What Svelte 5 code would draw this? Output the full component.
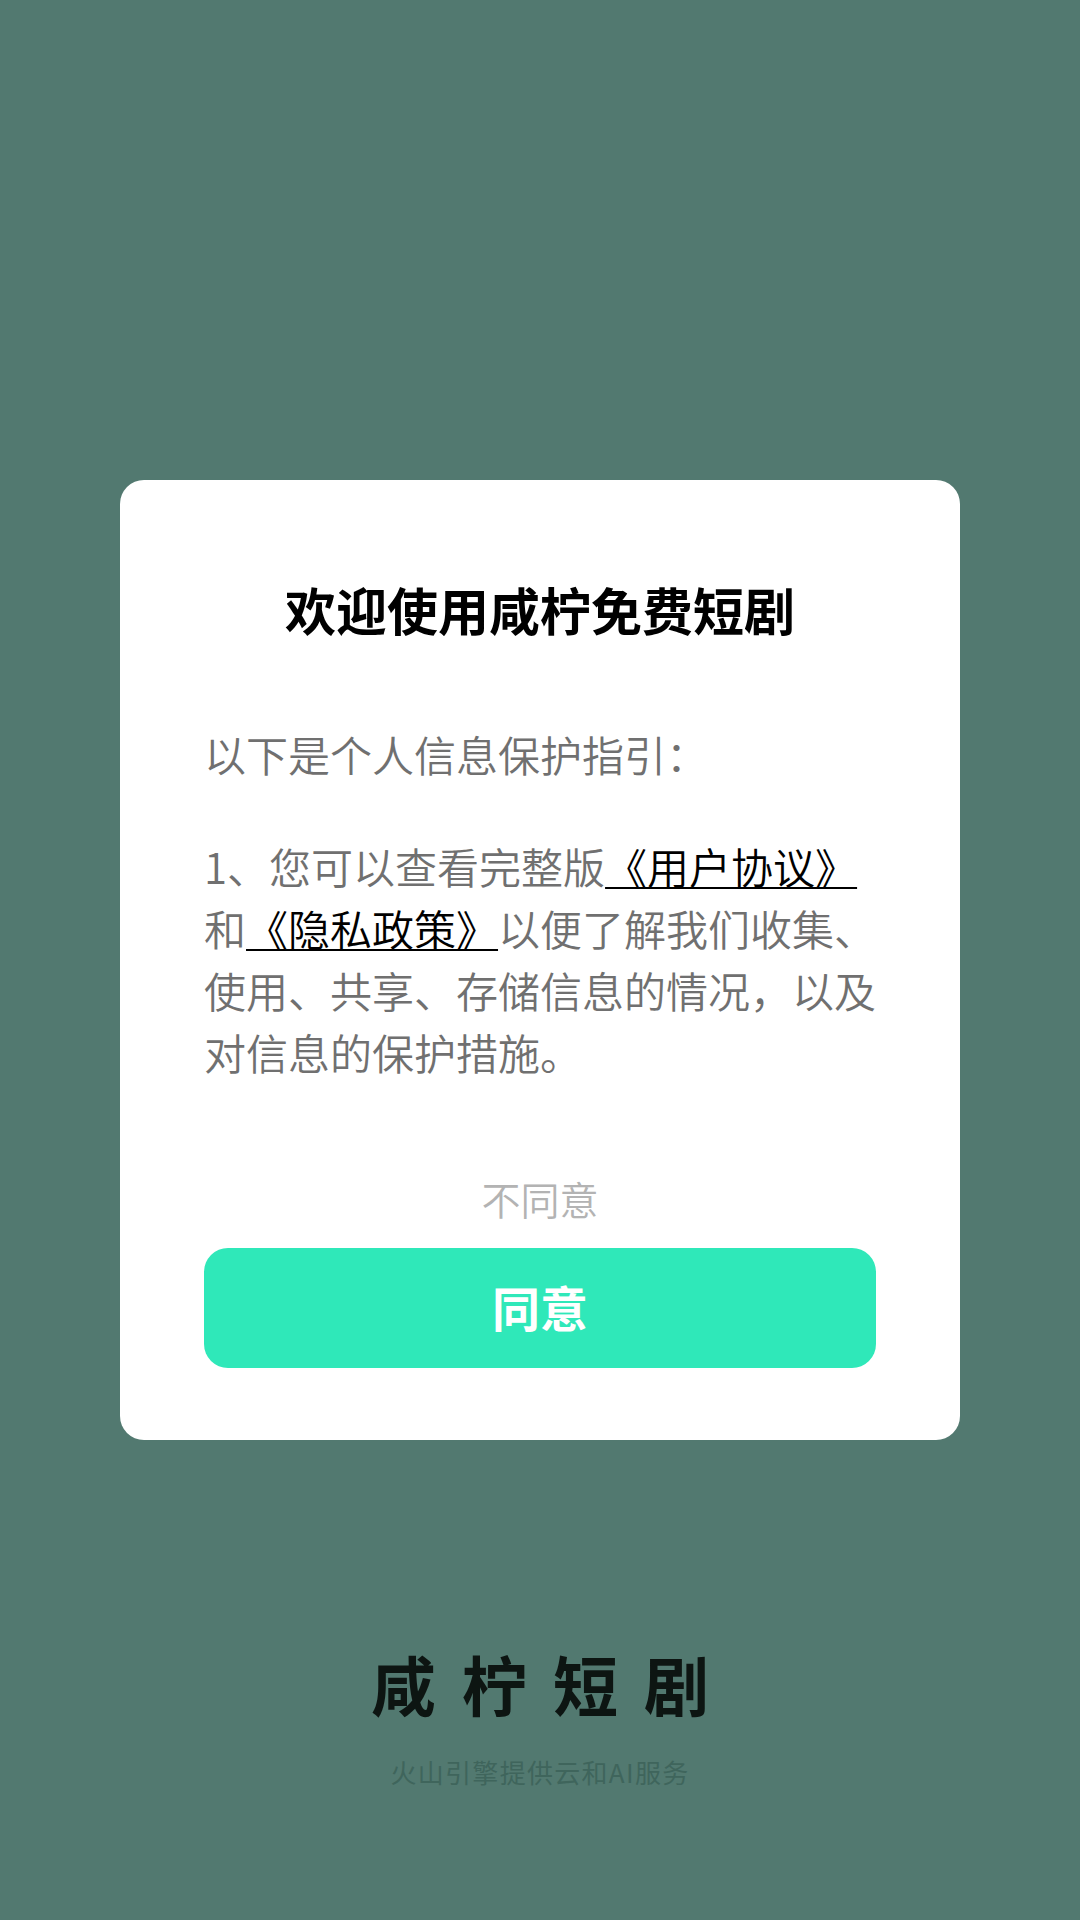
<script lang="ts">
	const title = '欢迎使用咸柠免费短剧';
</script>

<div class="page">
	<div class="card">
		<h1 class="title">{title}</h1>
		<p class="lead">以下是个人信息保护指引&#xFF1A;</p>
		<p class="terms">
			1、您可以查看完整版<a href="#agreement" class="link">《用户协议》</a>和<a href="#privacy" class="link">《隐私政策》</a>以便了解我们收集、使用、共享、存储信息的情况&#xFF0C;以及对信息的保护措施。
		</p>
		<button class="decline">不同意</button>
		<button class="agree">同意</button>
	</div>

	<div class="brand">
		<div class="logo">咸柠短剧</div>
		<div class="slogan">火山引擎提供云和AI服务</div>
	</div>
</div>

<style>
	:global(body) {
		margin: 0;
		background: #527970;
	}

	.page {
		height: 1920px;
		box-sizing: border-box;
		padding-top: 480px;
		display: flex;
		flex-direction: column;
		align-items: center;
		background: #527970;
		font-family: 'Noto Sans CJK SC', 'Noto Sans', sans-serif;
		overflow: hidden;
	}

	.card {
		width: 840px;
		height: 960px;
		box-sizing: border-box;
		padding: 0 84px;
		background: #fff;
		border-radius: 24px;
		display: flex;
		flex-direction: column;
	}

	.title {
		margin: 95px 0 0;
		font-size: 51px;
		line-height: 68px;
		font-weight: 600;
		color: #000;
		text-align: center;
	}

	.lead {
		margin: 80px 0 0;
		font-size: 42px;
		line-height: 62px;
		font-weight: 350;
		color: #707070;
	}

	.terms {
		margin: 50px -4px 0 0;
		font-size: 42px;
		line-height: 62px;
		font-weight: 350;
		color: #707070;
	}

	.link {
		color: #000;
		text-decoration: underline;
		text-decoration-thickness: 2px;
		text-underline-offset: 3px;
	}

	.decline {
		margin: 90px 0 0;
		padding: 0;
		border: 0;
		background: none;
		font: inherit;
		font-size: 39px;
		line-height: 50px;
		font-weight: 350;
		color: #b3b3b3;
		text-align: center;
	}

	.agree {
		margin: 25px 0 0;
		padding: 0 0 4px;
		height: 120px;
		flex-shrink: 0;
		border: 0;
		border-radius: 24px;
		background: #2fe8b9;
		font: inherit;
		font-size: 48px;
		font-weight: 600;
		color: #fff;
	}

	.brand {
		margin-top: 203px;
		display: flex;
		flex-direction: column;
		align-items: center;
	}

	.logo {
		font-size: 65px;
		line-height: 80px;
		font-weight: 700;
		letter-spacing: 26px;
		margin-right: -26px;
		color: #0d1512;
	}

	.slogan {
		margin-top: 31px;
		font-size: 26px;
		line-height: 36px;
		letter-spacing: 1.3px;
		color: #3f655c;
	}
</style>
